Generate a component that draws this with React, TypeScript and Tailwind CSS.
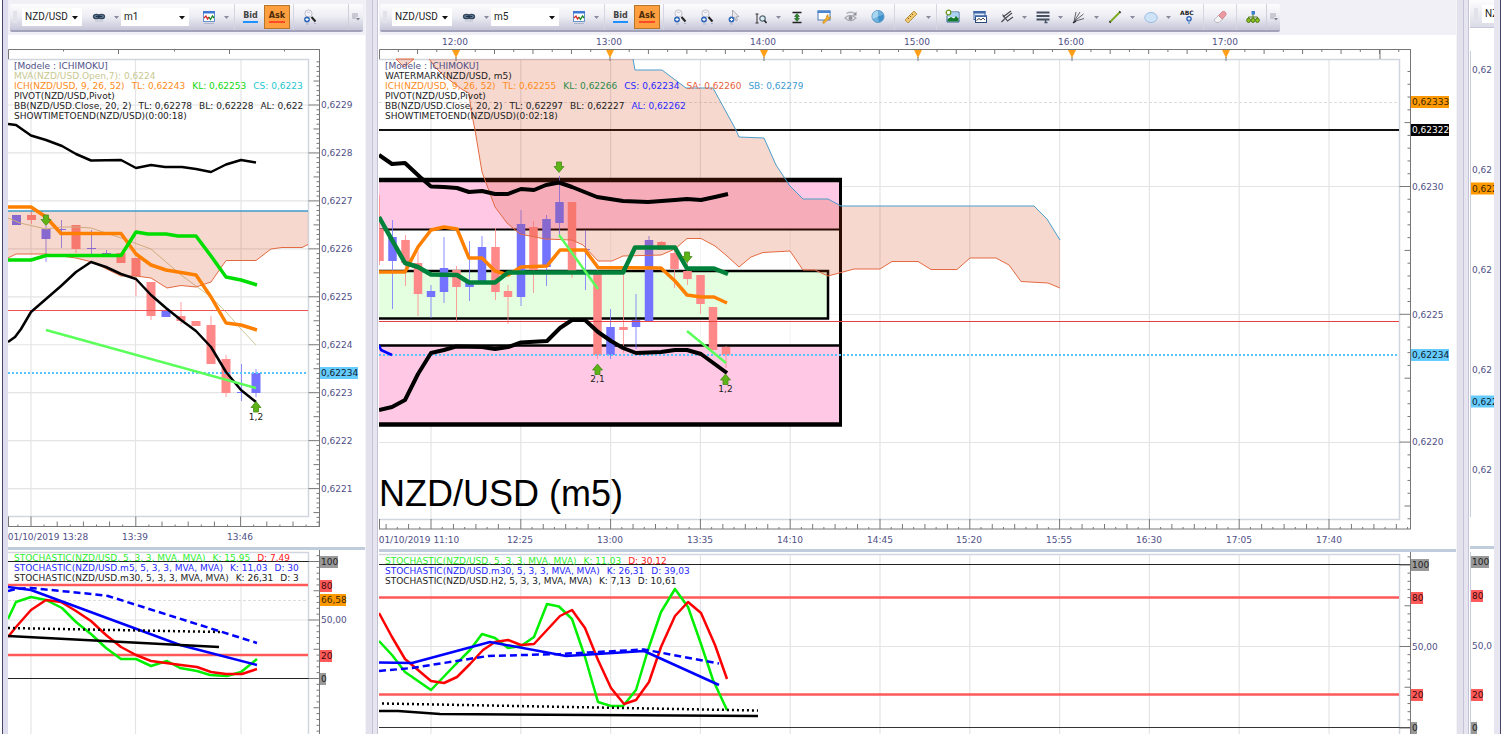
import type { ReactNode } from 'react'

type Segment = [text: string, className: string]
type Candle = [x: number, top: number, bottom: number, high: number, low: number, up: boolean]
type Tag = [y: number, text: string, kind?: 'orange' | 'black' | 'cyan' | 'gray' | 'red']

const TAG_COLORS = {
  orange: { bg: '#ff9900', fg: '#3a2600' },
  black: { bg: '#000000', fg: '#ffffff' },
  cyan: { bg: '#66ccff', fg: '#10202c' },
  gray: { bg: '#999999', fg: '#222222' },
  red: { bg: '#ff5a5a', fg: '#3a0a0a' },
}

const LABEL = "font-['DejaVu_Sans',Verdana,sans-serif] text-[9px]"

const range = (from: number, to: number, step: number) => {
  const out: number[] = []
  for (let v = from; v <= to; v += step) out.push(v)
  return out
}

/* ---------- toolbar icons ---------- */

function Svg({ children }: { children: ReactNode }) {
  return (
    <svg viewBox="0 0 16 16" className="size-4" fill="none" aria-hidden="true">
      {children}
    </svg>
  )
}

const LinkIcon = () => (
  <Svg>
    <ellipse cx="5.500" cy="7.500" rx="2.900" ry="2.100" fill="#8ea3bd" stroke="#34495f" strokeWidth="1.500" />
    <ellipse cx="10.500" cy="7.500" rx="2.900" ry="2.100" fill="#8ea3bd" stroke="#34495f" strokeWidth="1.500" />
    <path d="M4.500 7.500h7" stroke="#22364b" strokeWidth="1.600" />
    <path d="M4 12h8" stroke="#b9c0cf" />
  </Svg>
)

const ChartIcon = () => (
  <Svg>
    <rect x="2.500" y="2.500" width="11" height="10" fill="#fff" stroke="#6a92cc" />
    <path d="M2 2h12v2.500H2z" fill="#3f78d4" />
    <path d="M3 9l2-2 1.500 3L8 8" stroke="#d22" strokeWidth="1.300" />
    <path d="M8 8l1.500 2.500L11.500 7l1.500 2" stroke="#1a8a2a" strokeWidth="1.300" />
    <path d="M3 14.500h10" stroke="#aab6cc" />
  </Svg>
)

const ZoomPlusIcon = () => (
  <Svg>
    <circle cx="6.500" cy="4.500" r="3.600" fill="#f2f2f6" stroke="#c0c0cc" />
    <path d="M5 3.500h3" stroke="#d0d0d8" />
    <path d="M9.500 8l4 4.500" stroke="#222" strokeWidth="2" />
    <circle cx="5" cy="10.500" r="2.900" fill="#2f66b8" />
    <path d="M5 8.900v3.200M3.400 10.500h3.200" stroke="#fff" strokeWidth="1.200" />
    <path d="M4 15h3M12 14.500h2" stroke="#a9b4cc" />
  </Svg>
)

const CursorPlusIcon = () => (
  <Svg>
    <path d="M6.500 1v9l2-1.800 1.500 3.600 1.500-.7L10 7.800h3z" fill="#e8e8ee" stroke="#9a9aa8" strokeWidth=".8" />
    <circle cx="5.500" cy="10.500" r="2.900" fill="#2f66b8" />
    <path d="M5.500 8.900v3.200M3.900 10.500h3.200" stroke="#fff" strokeWidth="1.200" />
    <path d="M4 15h3" stroke="#a9b4cc" />
  </Svg>
)

const MeasureIcon = () => (
  <Svg>
    <path d="M2.500 5h3M2.500 14h3M4 5v9" stroke="#333" />
    <circle cx="9.500" cy="9.500" r="2.700" fill="#dbeef0" stroke="#567" strokeWidth="1.200" />
    <path d="M11.500 11.500l2 2.500" stroke="#222" strokeWidth="1.500" />
  </Svg>
)

const FitHeightIcon = () => (
  <Svg>
    <path d="M3.500 3.500h9M3.500 13.500h9" stroke="#222" strokeWidth="1.600" />
    <path d="M8 4.500l2.500 3H9v2h1.500L8 12.500 5.500 9.500H7v-2H5.500z" fill="#2f8a2f" stroke="#1c4c1c" strokeWidth=".5" />
  </Svg>
)

const NoteIcon = () => (
  <Svg>
    <rect x="2" y="2" width="12" height="9" fill="#fff" stroke="#4a78b8" />
    <path d="M1.500 1.500h13v2.500h-13z" fill="#4a86d0" />
    <path d="M6.500 13.500l4-5q-.5-2 1.500-3v2.500l1.500.5 1-1q.5 3-2.500 3l-4 4z" fill="#f5b32c" stroke="#c4851a" strokeWidth=".7" />
  </Svg>
)

const EyeIcon = () => (
  <Svg>
    <path d="M2 9q5-5 11 0-5.500 5-11 0z" fill="#eee" stroke="#a8a8b0" strokeWidth="1.200" />
    <circle cx="7.500" cy="9" r="2" fill="#90909a" />
    <path d="M3.500 4.500q4-2.500 8.500 0" stroke="#b0b0b8" strokeWidth="1.300" />
    <path d="M13.500 2.500v4h-4z" fill="#90909a" />
  </Svg>
)

const GlobeIcon = () => (
  <Svg>
    <circle cx="8" cy="7.500" r="6" fill="#6db1de" stroke="#5a98c4" />
    <path d="M8 7.500V1.800a5.700 5.700 0 0 0-5 8.300z" fill="#a9d5f0" />
    <path d="M8 7.500l5.400-1.800A5.700 5.700 0 0 1 9 13z" fill="#3f8fc8" />
  </Svg>
)

const RulerIcon = () => (
  <Svg>
    <path d="M2 11L11 2l3 3L5 14z" fill="#f0c870" stroke="#b89040" strokeWidth=".9" />
    <path d="M4.500 8.500L6 10M6.500 6.500L8 8M8.500 4.500L10 6" stroke="#8a6418" />
  </Svg>
)

const ImageIcon = () => (
  <Svg>
    <path d="M4 3h10v10H2V7z" fill="#fff" stroke="#2d5c9a" />
    <path d="M4 3.500h9.500V8H3z" fill="#a8d2f0" />
    <path d="M2.500 12.500V10L6 8l3 1.500L11 7l2.500 2.500v3z" fill="#117a2e" />
    <circle cx="3.500" cy="3.500" r="2.300" fill="#fff" stroke="#6a9a1e" strokeWidth="1.300" />
  </Svg>
)

const WindowsIcon = () => (
  <Svg>
    <rect x="2" y="2.500" width="11" height="8" fill="#dfeafa" stroke="#4068a8" />
    <path d="M1.500 2h12v2.500h-12z" fill="#4068a8" />
    <rect x="3.500" y="7" width="11" height="6.500" fill="#fff" stroke="#2a4878" />
    <path d="M3 6.500h12v1.500H3z" fill="#4068a8" />
    <path d="M4.500 11.500l2.500-2 2 1.500 2-2 2 2" stroke="#444" />
  </Svg>
)

const PitchforkIcon = () => (
  <Svg>
    <path d="M2.500 13L5.500 10M5.500 10L13 4M4 8l8-6M3.500 5.500l5 6.500 5.500-4" stroke="#4a4a52" strokeWidth="1.200" />
  </Svg>
)

const LinesIcon = () => (
  <Svg>
    <path d="M1.500 3.500h13M1.500 7h13M1.500 10.500h13" stroke="#465062" strokeWidth="2" />
    <path d="M9.500 13.500h3M10.500 10v4" stroke="#465062" strokeWidth="1.300" />
  </Svg>
)

const FanIcon = () => (
  <Svg>
    <path d="M3 12.500L5 3M3 12.500l6-9.500M3 12.500L12.500 5M3 12.500L13 9.500" stroke="#62626c" />
    <path d="M2 14l3-2" stroke="#222" strokeWidth="1.500" />
  </Svg>
)

const LineIcon = () => (
  <Svg>
    <path d="M3 13L13 3" stroke="#7aa820" strokeWidth="1.800" />
    <path d="M2.500 13.500l1-1M12.500 3.500l1-1" stroke="#333" strokeWidth="2" />
  </Svg>
)

const EllipseIcon = () => (
  <Svg>
    <ellipse cx="8" cy="8.500" rx="6.200" ry="5" fill="#cfe3f7" stroke="#9abce0" />
  </Svg>
)

const AbcIcon = () => (
  <Svg>
    <text x="1" y="6" className="font-['DejaVu_Sans',sans-serif] text-[6px] font-bold" fill="#222">ABC</text>
    <circle cx="10" cy="9.800" r="2.800" fill="#2f66b8" />
    <path d="M10 8.300v3M8.500 9.800h3" stroke="#fff" />
    <path d="M10 13v2" stroke="#8ab0d8" strokeWidth="2" />
  </Svg>
)

const EraserIcon = () => (
  <Svg>
    <path d="M2 11l4.500-4.500 4 3.500L7 13.500H4z" fill="#f4f4f4" stroke="#b0b0b8" strokeWidth=".8" />
    <path d="M6.500 6.500L10.500 2.500q2-1 3.500 1.500 .500 1.500-.500 2.500L10.500 10z" fill="#ec9aa2" stroke="#cc7a82" strokeWidth=".8" />
  </Svg>
)

const TreeIcon = () => (
  <Svg>
    <path d="M8 5v4M3.500 10.500V8h9v2.500" stroke="#4f7a18" />
    <rect x="6.500" y="2" width="3.500" height="3.500" fill="#3a80d0" />
    <ellipse cx="3.600" cy="11.300" rx="1.900" ry="2.200" fill="#8cc020" stroke="#4f7a18" />
    <ellipse cx="8" cy="11.300" rx="1.900" ry="2.200" fill="#8cc020" stroke="#4f7a18" />
    <ellipse cx="12.400" cy="11.300" rx="1.900" ry="2.200" fill="#8cc020" stroke="#4f7a18" />
  </Svg>
)

/* ---------- toolbar ---------- */

function IconButton({ label, children }: { label: string; children: ReactNode }) {
  return (
    <button aria-label={label} className="flex h-6 w-[27px] shrink-0 items-center justify-center">
      {children}
    </button>
  )
}

function Caret({ label }: { label: string }) {
  return (
    <button aria-label={label} className="flex h-6 w-[9px] shrink-0 items-center justify-center">
      <svg viewBox="0 0 5 3" className="h-[3px] w-[5px]" fill="#8a8a9c" aria-hidden="true">
        <path d="M0 0h5L2.500 3z" />
      </svg>
    </button>
  )
}

const Separator = () => (
  <div className="flex w-[6px] shrink-0 justify-center self-stretch">
    <div className="w-px bg-[#d6d6e2]" />
  </div>
)

function ToolbarSelect({ label, value, className }: { label: string; value: string; className: string }) {
  return (
    <div className={`relative h-[18px] shrink-0 bg-white ${className}`}>
      <select
        aria-label={label}
        defaultValue={value}
        className="block h-[18px] w-full appearance-none bg-transparent pl-[3px] font-['Roboto','Open_Sans',sans-serif] text-[10px] leading-[18px] text-[#222]"
      >
        <option>{value}</option>
      </select>
      <svg viewBox="0 0 6 4" className="pointer-events-none absolute top-2 right-1 h-1 w-[6px]" aria-hidden="true">
        <path d="M0 0h6L3 3.500z" fill="#111" />
      </svg>
    </div>
  )
}

function Overflow() {
  return (
    <button aria-label="More tools" className="flex h-full w-[15px] shrink-0 items-center justify-center border-l border-[#cfcfdc]">
      <svg viewBox="0 0 8 8" className="size-2" fill="none" aria-hidden="true">
        <path d="M0 1h6M0 3h6M0 5h4" stroke="#a4a4b4" />
        <path d="M4 5h4L6 7.500z" fill="#7a7a8c" />
      </svg>
    </button>
  )
}

function Toolbar({ period, className, children }: { period: string; className?: string; children: ReactNode }) {
  return (
    <div className="h-[35px] overflow-hidden bg-[#f1f0f6] pt-1">
      <div
        role="toolbar"
        className={`flex h-7 items-center rounded-[2px] border-b-2 border-[#a3a2bb] bg-linear-to-b from-[#fdfdfe] via-[#ececf3] to-[#c6c6d8] ${className ?? ''}`}
      >
        <div className="w-3 shrink-0 pl-[3px]">
          <div className="h-3 w-1 bg-[#e2e2ea]" />
        </div>
        <ToolbarSelect label="Instrument" value="NZD/USD" className="mr-[3px] w-[60px]" />
        <IconButton label="Link charts"><LinkIcon /></IconButton>
        <Caret label="Link options" />
        <ToolbarSelect label="Period" value={period} className="mr-[6px] w-[68px]" />
        <IconButton label="Chart type"><ChartIcon /></IconButton>
        <Caret label="Chart type options" />
        <Separator />
        <button className="flex h-6 w-[27px] shrink-0 items-center justify-center font-['DejaVu_Sans',sans-serif] text-[8px] font-bold text-[#444]">
          <span className="border-b-2 border-[#1e90ff] leading-[10px]">Bid</span>
        </button>
        <button className="flex h-6 w-[26px] shrink-0 items-center justify-center border border-[#b5762c] bg-[#ff9f40] font-['DejaVu_Sans',sans-serif] text-[8px] font-bold text-[#4a2a08]">
          <span className="border-b-2 border-[#ff4a2a] leading-[10px]">Ask</span>
        </button>
        <Separator />
        {children}
      </div>
    </div>
  )
}

/* ---------- chart parts ---------- */

function Legend({ rows, className }: { rows: Segment[][]; className: string }) {
  return (
    <div className={`absolute left-[6px] overflow-hidden whitespace-nowrap leading-[10px] ${LABEL} ${className}`}>
      {rows.map((row, i) => (
        <div key={i} className="flex gap-[7px]">
          {row.map(([text, color]) => (
            <span key={text} className={color}>{text}</span>
          ))}
        </div>
      ))}
    </div>
  )
}

function Line({ points, color, width = 2, dash }: { points: string; color: string; width?: number; dash?: string }) {
  return <polyline points={points} fill="none" stroke={color} strokeWidth={width} strokeDasharray={dash} strokeLinejoin="round" />
}

function HLine({ y, x1, x2, color, width = 1, dash }: { y: number; x1: number; x2: number; color: string; width?: number; dash?: string }) {
  return <line x1={x1} x2={x2} y1={y} y2={y} stroke={color} strokeWidth={width} strokeDasharray={dash} />
}

function Grid({ xs, ys, x1, x2, y1, y2 }: { xs: number[]; ys: number[]; x1: number; x2: number; y1: number; y2: number }) {
  return (
    <g stroke="#e4e4e6" strokeWidth="1.200">
      {xs.map((x) => <line key={x} x1={x} x2={x} y1={y1} y2={y2} />)}
      {ys.map((y) => <line key={y} x1={x1} x2={x2} y1={y} y2={y} />)}
    </g>
  )
}

function Candles({ data, width }: { data: Candle[]; width: number }) {
  return (
    <>
      {data.map(([x, top, bottom, high, low, up]) => (
        <g key={x} fill={up ? '#7373ff' : '#ff8888'} stroke="none">
          <rect x={x - 0.5} y={high} width="1" height={low - high} opacity="0.8" />
          <rect x={x - width / 2} y={top} width={width} height={Math.max(bottom - top, 1)} />
        </g>
      ))}
    </>
  )
}

function Arrow({ x, y, up, text }: { x: number; y: number; up?: boolean; text?: string }) {
  return (
    <>
      <path
        d={up
          ? `M${x} ${y - 5.5}l5 6h-2.500v4.500h-5v-4.500h-2.500z`
          : `M${x} ${y + 5.5}l5 -6h-2.500v-4.500h-5v4.500h-2.500z`}
        fill="#5cb417"
        stroke="#4a8a1c"
        strokeWidth="0.8"
      />
      {text && <text x={x} y={y + 12.5} textAnchor="middle" className={LABEL} fill="#222">{text}</text>}
    </>
  )
}

// Vertical scale: every 10th tick reaches the plot, every 5th is half length
function PriceAxis({ x, y1, y2, origin, step }: { x: number; y1: number; y2: number; origin: number; step: number }) {
  const first = Math.ceil((y1 + 10 - origin) / step)
  const last = Math.floor((y2 - 2 - origin) / step)
  return (
    <g stroke="#777">
      <line x1={x} x2={x} y1={y1} y2={y2} />
      {range(first, last, 1).map((i) => {
        const len = i % 10 === 0 ? 11 : i % 5 === 0 ? 6 : 3
        const y = origin + i * step
        return <line key={i} x1={x - len} x2={x} y1={y} y2={y} />
      })}
    </g>
  )
}

function TimeAxis({ x1, x2, y, origin, step }: { x1: number; x2: number; y: number; origin: number; step: number }) {
  const first = Math.ceil((x1 + 4 - origin) / step)
  const last = Math.floor((x2 - origin) / step)
  return (
    <g stroke="#777">
      <line x1={x1} x2={x2} y1={y} y2={y} />
      <line x1={x1 + 0.5} x2={x1 + 0.5} y1={y - 10} y2={y} />
      {range(first, last, 1).map((i) => {
        const len = i % 8 === 0 ? 10 : i % 2 === 0 ? 5 : 2
        const x = origin + i * step
        return <line key={i} x1={x} x2={x} y1={y - len} y2={y} />
      })}
    </g>
  )
}

function Tags({ x, items }: { x: number; items: Tag[] }) {
  return (
    <g className={LABEL}>
      {items.map(([y, text, kind]) => {
        const width = text.includes(',') ? text.length * 6 - 4 : text.length * 6
        return (
          <g key={y}>
            {kind && <rect x={x - 1} y={y - 6} width={width} height="12" fill={TAG_COLORS[kind].bg} />}
            <text x={x} y={y + 3} fill={kind ? TAG_COLORS[kind].fg : '#4f4f86'}>{text}</text>
          </g>
        )
      })}
    </g>
  )
}

function TimeLabels({ y, items }: { y: number; items: [number, string][] }) {
  return (
    <g className={LABEL} fill="#4f4f86">
      {items.map(([x, text]) => <text key={text} x={x} y={y} textAnchor="middle">{text}</text>)}
    </g>
  )
}

/* ---------- m1 chart ---------- */

const M1_X = [31, 135.5, 241]
const M1_Y = range(105, 490, 47.95)

const M1_LEGEND: Segment[][] = [
  [['[Modele : ICHIMOKU]', 'text-[#4f4f86]']],
  [['MVA(NZD/USD.Open,7): 0,6224', 'text-[#c8c890]']],
  [['ICH(NZD/USD, 9, 26, 52)', 'text-[#ff8c1a]'], ['TL: 0,62243', 'text-[#ff8c1a]'], ['KL: 0,62253', 'text-[#10d810]'], ['CS: 0,6223', 'text-[#20c8d0]']],
  [['PIVOT(NZD/USD,Pivot)', 'text-[#222]']],
  [['BB(NZD/USD.Close, 20, 2)', 'text-[#222]'], ['TL: 0,62278', 'text-[#222]'], ['BL: 0,62228', 'text-[#222]'], ['AL: 0,622', 'text-[#222]']],
  [['SHOWTIMETOEND(NZD/USD)(0:00:18)', 'text-[#222]']],
]

const M1_STOCH_LEGEND: Segment[][] = [
  [['STOCHASTIC(NZD/USD, 5, 3, 3, MVA, MVA)', 'text-[#30f030]'], ['K: 15,95', 'text-[#30f030]'], ['D: 7,49', 'text-[#ff2020]']],
  [['STOCHASTIC(NZD/USD.m5, 5, 3, 3, MVA, MVA)', 'text-[#2828ff]'], ['K: 11,03', 'text-[#2828ff]'], ['D: 30', 'text-[#2828ff]']],
  [['STOCHASTIC(NZD/USD.m30, 5, 3, 3, MVA, MVA)', 'text-[#222]'], ['K: 26,31', 'text-[#222]'], ['D: 3', 'text-[#222]']],
]

const M1_CANDLES: Candle[] = [
  [16.5, 215, 225, 215, 225, true],
  [31.5, 215, 220, 211, 224, false],
  [46, 229, 239, 226, 262, true],
  [61.5, 229, 230, 220, 248, true],
  [76, 225, 249, 225, 253, false],
  [91.5, 248, 249, 230, 257, true],
  [106.5, 253, 254, 250, 257, true],
  [121, 253, 263, 253, 263, false],
  [136, 258, 276, 258, 296, false],
  [151, 282, 316, 282, 320, false],
  [166, 311, 317, 309, 317, true],
  [181, 316, 321, 302, 324, false],
  [196, 321, 326, 321, 326, false],
  [211, 325, 364, 316, 364, false],
  [226, 359, 393, 355, 397, false],
  [241.5, 392, 393, 364, 401, true],
  [256, 373, 393, 369, 397, true],
]

const M1_SPAN_A = '8,258 16,254 46,254 76,258 92,262 121,276 136,276 151,278 167,288 181,285.5 196,287 211,282 226,260.5 256,260.5 271,249 282,247.5 302,247.5 308,244.5'

function M1Chart() {
  return (
    <svg viewBox="8 35 357 512" className="block h-auto w-full">
      <Grid xs={M1_X} ys={M1_Y} x1={8} x2={308} y1={60} y2={516} />
      <path d="M8 59.500H308.500V516.500H8" fill="none" stroke="#d0d5e0" strokeWidth="1.500" />
      <path d="M8.500 59V49.500H319.500M63.500 49v2.500M118.500 49v5M174.500 49v2.500M229.500 49v5M284.500 49v2.500" fill="none" stroke="#777" />
      <Candles data={M1_CANDLES} width={9} />
      <Line points="8,218 20,223 46,229 61,227 76,227 91,228 121,238 151,249 181,275 211,297 226,312 241,329 256,345" color="#cfc79a" width={1} />
      <polygon points={`8,211 ${M1_SPAN_A} 308,211`} fill="rgb(215,60,10)" fillOpacity="0.2" />
      <HLine y={211} x1={8} x2={308} color="#3d9cc8" width={1.5} />
      <Line points={M1_SPAN_A} color="#e46a42" width={1} />
      <HLine y={310.5} x1={8} x2={308} color="#f05050" />
      <HLine y={373} x1={8} x2={308} color="#55c4ff" width={2} dash="2 2" />
      <Line points="8,124 16,125 31,135.5 46,140 62,146 76,154 91,160.5 121,160 136,168 151,165 165,167 182,167 196,169 211,172 226,164.5 241,160 256,162.5" color="#000" width={2.5} />
      <Line points="8,342 15,337 21,329 31,312 46,299 61,286 76,272 91,262 106,267 121,274 136,279 151,295 166,308 181,320 196,331 211,347 226,372 241,390 256,402" color="#000" width={2.5} />
      <Line points="8,207 31,207 46,217 61,233.5 121,233.5 136,254 151,265 166,270 196,275 211,297 226,323 241,325 257,330" color="#ff8000" width={3.5} />
      <Line points="8,260 31,260 46,255.5 121,255.5 136,232 148,234 166,234 178,236 196,236 211,256 226,277 241,280 257,285" color="#00dd00" width={3.5} />
      <Line points="46,330 256,388" color="#5aff5a" width={2.5} />
      <Arrow x={46} y={220} />
      <Arrow x={256} y={407} up text="1,2" />
      <PriceAxis x={319.5} y1={49} y2={526} origin={105} step={4.795} />
      <TimeAxis x1={8} x2={320} y={526.5} origin={31} step={13.1} />
      <Tags
        x={321}
        items={[
          [105, '0,6229'], [153, '0,6228'], [201, '0,6227'], [249, '0,6226'], [297, '0,6225'], [345, '0,6224'],
          [373, '0,62234', 'cyan'], [393, '0,6223'], [441, '0,6222'], [489, '0,6221'],
        ]}
      />
      <TimeLabels y={540} items={[[48, '01/10/2019 13:28'], [135, '13:39'], [240, '13:46']]} />
    </svg>
  )
}

function M1Stochastic() {
  return (
    <svg viewBox="8 550 357 184" className="block h-auto w-full">
      <Grid xs={M1_X} ys={[620]} x1={8} x2={308} y1={553} y2={734} />
      <path d="M8 552.500H308.500V734" fill="none" stroke="#d0d5e0" strokeWidth="1.500" />
      <HLine y={600.5} x1={8} x2={308} color="#ddd" dash="3 2" />
      <HLine y={561.5} x1={8} x2={319} color="#222" />
      <HLine y={678.5} x1={8} x2={319} color="#222" />
      <HLine y={585} x1={8} x2={308} color="#ff5858" width={2.5} />
      <HLine y={655} x1={8} x2={308} color="#ff5858" width={2.5} />
      <Line points="8,619 16,602 31,597 46,600 62,608 76,622 91,634 106,648 121,659 136,659 151,666 167,661 180,668 197,671 210,675 227,676 241,672 257,659" color="#00f000" width={2.5} />
      <Line points="8,637 16,627 31,610 46,600 61,602 76,611 91,621 106,635 121,647 136,655 151,661 166,663 181,665 197,667 211,672 226,674 242,674 257,669" color="#ff0000" width={2.5} />
      <Line points="8,591 16,589 31,588 61,591 91,594 108,596 257,643" color="#0000ff" width={2.5} dash="7 4" />
      <Line points="8,587 31,590 180,645 257,665" color="#0000ff" width={2.5} />
      <Line points="8,628 220,632" color="#000" width={2.5} dash="2 3" />
      <Line points="8,636 219,647" color="#000" width={2.5} />
      <PriceAxis x={319.5} y1={543} y2={736} origin={620} step={5.85} />
      <Tags
        x={321}
        items={[[562, '100', 'gray'], [586, '80', 'red'], [600, '66,58', 'orange'], [620, '50,00'], [656, '20', 'red'], [679, '0', 'gray']]}
      />
    </svg>
  )
}

/* ---------- m5 chart ---------- */

const M5_X = range(431, 1340, 89.8)
const HOURS: [number, string][] = [[456, '12:00'], [610, '13:00'], [764, '14:00'], [918, '15:00'], [1072, '16:00'], [1226, '17:00']]

const M5_LEGEND: Segment[][] = [
  [['[Modele : ICHIMOKU]', 'text-[#4f4f86]']],
  [['WATERMARK(NZD/USD, m5)', 'text-[#222]']],
  [['ICH(NZD/USD, 9, 26, 52)', 'text-[#ff8c1a]'], ['TL: 0,62255', 'text-[#ff8c1a]'], ['KL: 0,62266', 'text-[#2a8a4a]'], ['CS: 0,62234', 'text-[#2828ff]'], ['SA: 0,62260', 'text-[#e8603a]'], ['SB: 0,62279', 'text-[#3d9cd0]']],
  [['PIVOT(NZD/USD,Pivot)', 'text-[#222]']],
  [['BB(NZD/USD.Close, 20, 2)', 'text-[#222]'], ['TL: 0,62297', 'text-[#222]'], ['BL: 0,62227', 'text-[#222]'], ['AL: 0,62262', 'text-[#2828ff]']],
  [['SHOWTIMETOEND(NZD/USD)(0:02:18)', 'text-[#222]']],
]

const M5_STOCH_LEGEND: Segment[][] = [
  [['STOCHASTIC(NZD/USD, 5, 3, 3, MVA, MVA)', 'text-[#30f030]'], ['K: 11,03', 'text-[#30f030]'], ['D: 30,12', 'text-[#ff2020]']],
  [['STOCHASTIC(NZD/USD.m30, 5, 3, 3, MVA, MVA)', 'text-[#2828ff]'], ['K: 26,31', 'text-[#2828ff]'], ['D: 39,03', 'text-[#2828ff]']],
  [['STOCHASTIC(NZD/USD.H2, 5, 3, 3, MVA, MVA)', 'text-[#222]'], ['K: 7,13', 'text-[#222]'], ['D: 10,61', 'text-[#222]']],
]

const M5_CANDLES: Candle[] = [
  [379.5, 229, 261, 195, 265, false],
  [392.5, 237, 261, 220, 309, true],
  [405.5, 240, 263, 235, 286, false],
  [418, 263, 294, 251, 316, false],
  [431, 291, 297, 285, 318, true],
  [444, 268, 292, 237, 303, true],
  [456.5, 270, 287, 266, 321, false],
  [469.5, 283, 287, 241, 301, true],
  [482, 247, 282, 236, 282, true],
  [495.5, 247, 292, 228, 300, false],
  [508, 291, 297, 285, 324, false],
  [521, 224, 297, 210, 306, true],
  [533.5, 227, 270, 221, 293, false],
  [546.5, 219, 267, 215, 286, true],
  [559.5, 202, 223, 176, 235, true],
  [572, 202, 271, 202, 278, false],
  [585.5, 249, 250, 230, 290, true],
  [597.5, 272, 355, 270, 359, false],
  [610.5, 327, 355, 309, 359, true],
  [623.5, 327, 330, 272, 353, false],
  [636, 320, 327, 294, 349, true],
  [649, 240, 321, 236, 321, true],
  [661.5, 242, 250, 241, 250, false],
  [674.5, 253, 269, 250, 288, false],
  [687.5, 271, 279, 255, 285, false],
  [700.5, 275, 304, 275, 314, false],
  [713, 307, 350, 307, 350, false],
  [726, 347, 355, 346, 368, false],
]

const M5_SPAN_A = '429,59 436,68 444,76 463,90 469,93 471,110 475,130 482,172 495,207 507,223 520,234 545,239 572,240 583,245 598,261 612,261 623,256 661,255 675,249 687,238.5 701,238.5 715,246 727,256 739,267 751,257 763,252.5 790,251 803,270 815,270 828,276 854,269 880,269 892,261.5 918,261.5 931,269.5 957,269.5 970,258 996,258 1009,265 1021,281.5 1048,283 1060,288'
const M5_SPAN_B = '633,59 635,70 662,70 686,88 713,88 736,130 739,137 764,138 776,165 790,186 803,199 828,199 841,206 1034,206 1047,219 1060,240'
const M5_SPAN_B_REVERSED = M5_SPAN_B.split(' ').reverse().join(' ')

function M5Chart() {
  return (
    <svg viewBox="379 35 1077 514" className="block h-auto w-full">
      <Grid xs={M5_X} ys={[186.5, 314.5, 442.5]} x1={379} x2={1399} y1={60} y2={519} />
      <HLine y={102.5} x1={379} x2={1399} color="#ddd" dash="3 2" />
      <path d="M379 59.500H1399.500V519.500H379" fill="none" stroke="#d0d5e0" strokeWidth="1.500" />

      {/* hour scale */}
      <path d="M379.500 59V49.500H1410.500" fill="none" stroke="#777" />
      <g stroke="#777">
        {range(398.3, 1400, 19.24).map((x, i) => (
          <line key={x} x1={x} x2={x} y1={49} y2={i % 2 === 0 ? 52 : 54} />
        ))}
        <line x1={1380} x2={1380} y1={49} y2={59} />
      </g>
      {HOURS.map(([x]) => (
        <g key={x}>
          <path d={`M${x - 4} 50h8l-4 8z`} fill="#ffa018" />
          <line x1={x} x2={x} y1={57} y2={61} stroke="#777" />
        </g>
      ))}
      <TimeLabels y={45} items={HOURS.map(([x, text]) => [x - 1, text])} />

      {/* pivot zones */}
      <rect x="379" y="180" width="461" height="49" fill="#ffc9e5" />
      <rect x="379" y="345" width="461" height="79" fill="#ffc9e5" />
      <rect x="379" y="229" width="461" height="116" fill="#fff" fillOpacity="0.6" />
      <rect x="379" y="270" width="449" height="48" fill="#e3ffe0" />
      <HLine y={229.5} x1={379} x2={840} color="#000" width={2} />
      <HLine y={345.5} x1={379} x2={840} color="#000" width={2.5} />
      <path d="M379 271H828V318.500H379" fill="none" stroke="#000" strokeWidth="2.500" />
      <path d="M840.500 178V426" stroke="#000" strokeWidth="3" />
      <HLine y={180} x1={379} x2={842} color="#000" width={4.5} />
      <HLine y={424.5} x1={379} x2={842} color="#000" width={4.5} />

      <HLine y={130} x1={379} x2={1399} color="#111" width={2} />
      <Candles data={M5_CANDLES} width={8.5} />
      <polygon points={`${M5_SPAN_A} ${M5_SPAN_B_REVERSED}`} fill="rgb(215,60,10)" fillOpacity="0.2" />
      <polygon points="396,59 404,67 414,59" fill="rgb(215,60,10)" fillOpacity="0.2" stroke="#e46a42" />
      <Line points={M5_SPAN_B} color="#4a9fcc" width={1} />
      <Line points={M5_SPAN_A} color="#e46a42" width={1} />
      <HLine y={321.5} x1={379} x2={1399} color="#e84040" />
      <HLine y={355} x1={379} x2={1399} color="#55c4ff" width={2} dash="2 2" />

      <Line points="379,155 392,164 405,163 420,177 431,186.5 444,187 457,188 469,192 482,191 495,194 508,194 521,189 534,190 546,185 559,182.5 572,187 597,197 623,201 648,202 675,200 687,199 701,200 715,197 728,194" color="#000" width={4} />
      <Line points="379,410 392,407 405,400 418,374 431,353 444,350 456,346.5 482,347 495,349 508,347 521,342.5 547,341 560,328 572,320 585,320 598,332 611,341 623,348 636,353 661,352 675,350 687,350 701,354 727,373" color="#000" width={4} />
      <Line points="379,272 405,272 418,247 431,230 444,227 457,229 469,258 482,258 495,271 508,275 521,267 547,266 560,250 585,250 598,267.5 661,268 675,281 687,295 701,297 714,297 727,303" color="#ff8000" width={3.5} />
      <Line points="379,217 405,263 418,267 431,274.5 457,275 469,282.5 495,282.5 508,272.5 623,272.5 635,247.5 675,247.5 687,268.5 714,268.5 728,274" color="#00823c" width={4.5} />
      <Line points="559,235 598,289" color="#5aff5a" width={2.5} />
      <Line points="687,331 726,363" color="#5aff5a" width={2.5} />
      <Line points="379,345 381,350 392,355" color="#0000ff" width={2.5} />
      <Arrow x={559} y={167} />
      <Arrow x={687} y={257} />
      <Arrow x={597.5} y={369.5} up text="2,1" />
      <Arrow x={725.5} y={379.5} up text="1,2" />

      <text x="379" y="506" className="font-['Liberation_Sans',Arial,sans-serif] text-[36px]" fill="#000">
        NZD/USD (m5)
      </text>

      <PriceAxis x={1410.5} y1={49} y2={529} origin={186.5} step={12.78} />
      <TimeAxis x1={379} x2={1411} y={529} origin={431} step={11.225} />
      <Tags
        x={1412}
        items={[
          [102, '0,62333', 'orange'], [130, '0,62322', 'black'], [187, '0,6230'], [315, '0,6225'],
          [355, '0,62234', 'cyan'], [442, '0,6220'],
        ]}
      />
      <TimeLabels
        y={543}
        items={[
          [419, '01/10/2019 11:10'], [520, '12:25'], [610, '13:00'], [700, '13:35'], [790, '14:10'], [880, '14:45'],
          [969, '15:20'], [1059, '15:55'], [1149, '16:30'], [1239, '17:05'], [1329, '17:40'],
        ]}
      />
    </svg>
  )
}

function M5Stochastic() {
  return (
    <svg viewBox="379 552 1077 182" className="block h-auto w-full">
      <Grid xs={M5_X} ys={[646.5]} x1={379} x2={1399} y1={555} y2={734} />
      <path d="M379 554.500H1399.500V734" fill="none" stroke="#d0d5e0" strokeWidth="1.500" />
      <HLine y={564.5} x1={379} x2={1410} color="#222" />
      <HLine y={727.5} x1={379} x2={1410} color="#333" />
      <HLine y={597.5} x1={379} x2={1399} color="#ff5858" width={2.5} />
      <HLine y={694.5} x1={379} x2={1399} color="#ff5858" width={2.5} />
      <Line points="379,641 392,655 405,672 431,690 455,665 470,650 482,634 495,638 508,648 521,646 534,637 547,604 559,606.5 572,619 585,657 598,702 611,706 623,706 636,690 648,650 661,612 675,589 688,607 701,644 713,680 727,710" color="#00f000" width={2.5} />
      <Line points="379,613 392,637 405,659 431,681 444,683 457,677 470,664 483,650 495,642 508,640 521,645 534,644 547,630 560,616 572,610 585,628 598,660 611,688 624,704 636,700 649,682 661,647 675,616 688,602 701,613 715,645 727,679" color="#ff0000" width={2.5} />
      <Line points="379,671 412,668 488,656 560,654 644,649.5 719,663.5" color="#0000ff" width={2.5} dash="7 4" />
      <Line points="379,662.5 412,663 490,642 566,656 644,651 719,685" color="#0000ff" width={2.5} />
      <Line points="382,703.5 758,710.5" color="#000" width={2.5} dash="2 3" />
      <Line points="379,711 398,711 440,714 758,716" color="#000" width={2.5} />
      <PriceAxis x={1410.5} y1={545} y2={736} origin={646.5} step={8.15} />
      <Tags
        x={1412}
        items={[[565, '100', 'gray'], [598, '80', 'red'], [647, '50,00'], [695, '20', 'red'], [728, '0', 'gray']]}
      />
    </svg>
  )
}

/* ---------- page ---------- */

const Splitter = () => (
  <div className="flex w-[14px] shrink-0">
    <div className="w-[7px] border-l border-[#f4f4f8] bg-[#e2e1ec]" />
    <div className="w-[6px] border-x border-[#c3c2d6] bg-[#e6e5f0]" />
    <div className="w-px bg-white" />
  </div>
)

const PaneDivider = () => <div className="h-[3px] bg-[#c0cbdc]" />

export default function App() {
  return (
    <main className="flex w-full overflow-hidden bg-white">
      <div className="w-[8px] shrink-0 border-l-2 border-white">
        <div className="h-full border-l border-[#45456a] bg-[#dedded]" />
      </div>

      <section className="w-[357px] shrink-0" aria-label="NZD/USD m1">
        <Toolbar period="m1" className="mr-[2px] ml-[2px]">
          <IconButton label="Zoom in"><ZoomPlusIcon /></IconButton>
          <div className="flex-1" />
          <Overflow />
        </Toolbar>
        <div className="relative">
          <M1Chart />
          <Legend rows={M1_LEGEND} className="top-[26px] w-[298px]" />
        </div>
        <PaneDivider />
        <div className="relative">
          <M1Stochastic />
          <Legend rows={M1_STOCH_LEGEND} className="top-[3px] w-[298px]" />
        </div>
      </section>

      <Splitter />

      <section className="min-w-0 flex-1" aria-label="NZD/USD m5">
        <Toolbar period="m5" className="ml-px w-[900px] max-w-full overflow-hidden">
          <IconButton label="Zoom in"><ZoomPlusIcon /></IconButton>
          <IconButton label="Zoom out"><ZoomPlusIcon /></IconButton>
          <IconButton label="Pointer"><CursorPlusIcon /></IconButton>
          <IconButton label="Measure"><MeasureIcon /></IconButton>
          <Caret label="Measure options" />
          <IconButton label="Fit height"><FitHeightIcon /></IconButton>
          <IconButton label="Properties"><NoteIcon /></IconButton>
          <IconButton label="Show or hide"><EyeIcon /></IconButton>
          <IconButton label="Web"><GlobeIcon /></IconButton>
          <Separator />
          <IconButton label="Ruler"><RulerIcon /></IconButton>
          <Caret label="Ruler options" />
          <Separator />
          <IconButton label="Insert image"><ImageIcon /></IconButton>
          <IconButton label="Windows"><WindowsIcon /></IconButton>
          <IconButton label="Pitchfork"><PitchforkIcon /></IconButton>
          <Caret label="Pitchfork options" />
          <IconButton label="Levels"><LinesIcon /></IconButton>
          <Caret label="Levels options" />
          <IconButton label="Fan"><FanIcon /></IconButton>
          <Caret label="Fan options" />
          <IconButton label="Line"><LineIcon /></IconButton>
          <Caret label="Line options" />
          <IconButton label="Ellipse"><EllipseIcon /></IconButton>
          <Caret label="Ellipse options" />
          <IconButton label="Add text"><AbcIcon /></IconButton>
          <Separator />
          <IconButton label="Eraser"><EraserIcon /></IconButton>
          <Separator />
          <IconButton label="Tree"><TreeIcon /></IconButton>
          <div className="flex-1" />
          <Overflow />
        </Toolbar>
        <div className="relative">
          <M5Chart />
          <Legend rows={M5_LEGEND} className="top-[26px]" />
        </div>
        <PaneDivider />
        <div className="relative">
          <M5Stochastic />
          <Legend rows={M5_STOCH_LEGEND} className="top-[4px]" />
        </div>
      </section>

      <Splitter />

      {/* third chart, cut by the window edge */}
      <section className="w-[24px] shrink-0 overflow-hidden" aria-label="NZD/USD">
        <div className="flex h-7 items-center overflow-hidden border-b border-[#c6c6d8] bg-linear-to-b from-[#fdfdfe] to-[#dcdce8]">
          <div className="mx-1 h-3 w-1 shrink-0 bg-[#e2e2ea]" />
          <div className="bg-white pl-[3px] font-['Roboto','Open_Sans',sans-serif] text-[10px] leading-[18px] text-[#222]">NZ</div>
        </div>
        <svg viewBox="1470 28 24 518" className="block h-auto w-full">
          <path d="M1470.500 51V517" stroke="#c8cedc" />
          <Tags
            x={1472}
            items={[
              [70, '0,62'], [170, '0,62'], [188.5, '0,622', 'orange'], [270, '0,62'], [370, '0,62'],
              [401.5, '0,622', 'cyan'], [470, '0,62'],
            ]}
          />
        </svg>
        <PaneDivider />
        <svg viewBox="1470 549 24 185" className="block h-auto w-full">
          <path d="M1470.500 552V734" stroke="#c8cedc" />
          <Tags x={1472} items={[[562, '100', 'gray'], [596, '80', 'red'], [646, '50,0'], [695, '20', 'red'], [728, '0', 'gray']]} />
        </svg>
      </section>
      <div className="w-[8px] shrink-0 border-r border-white">
        <div className="h-full border-r border-[#45456a] bg-[#e6e5f0]" />
      </div>
    </main>
  )
}
